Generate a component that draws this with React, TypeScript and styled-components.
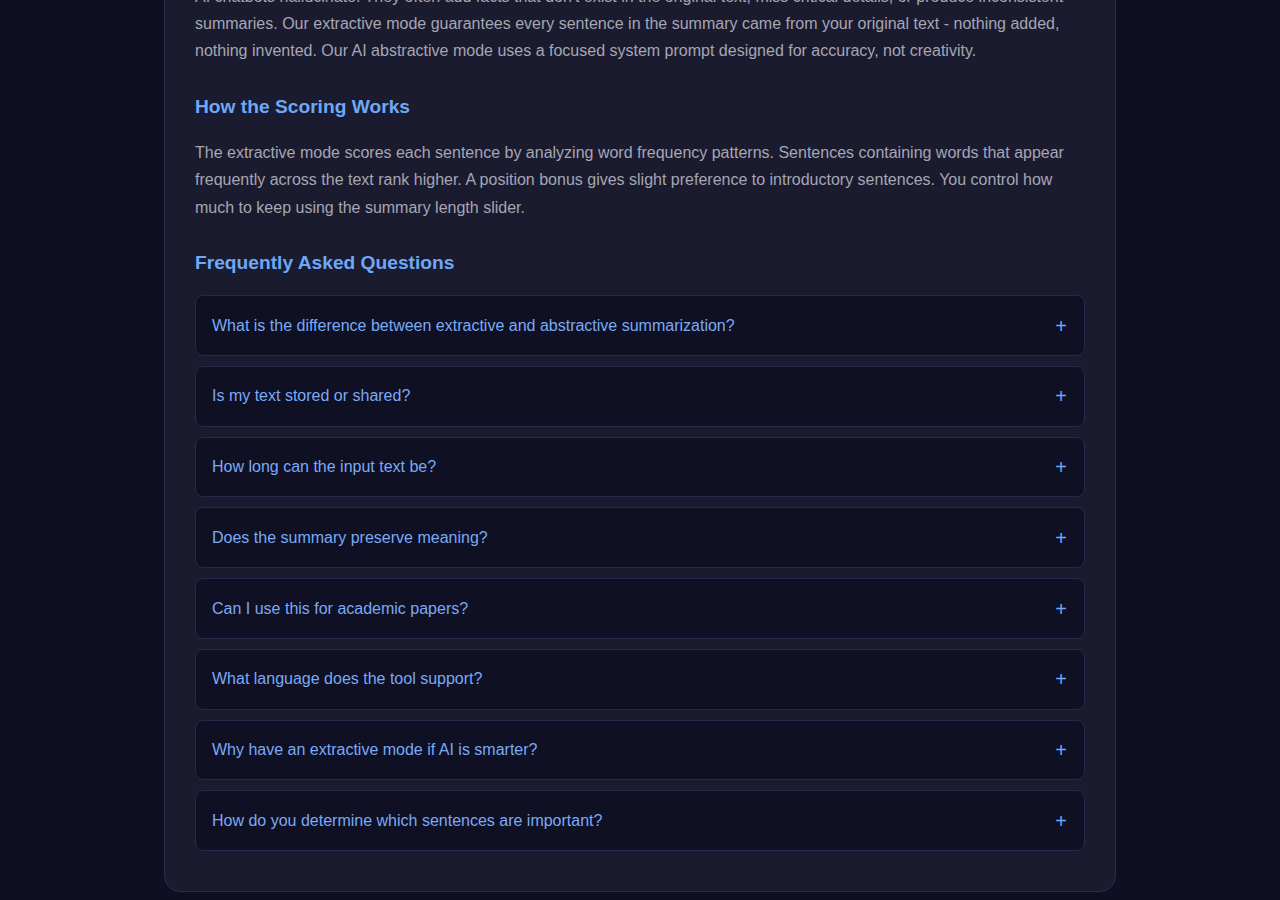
import styled, { createGlobalStyle } from 'styled-components';

const faqs = [
  'What is the difference between extractive and abstractive summarization?',
  'Is my text stored or shared?',
  'How long can the input text be?',
  'Does the summary preserve meaning?',
  'Can I use this for academic papers?',
  'What language does the tool support?',
  'Why have an extractive mode if AI is smarter?',
  'How do you determine which sentences are important?',
];

export default function App() {
  return (
    <>
      <GlobalStyle />
      <Page>
        <InfoCard>
          <Paragraph>
            AI chatbots hallucinate. They often add facts that don't exist in the original text, miss
            critical details, or produce inconsistent summaries. Our extractive mode guarantees every
            sentence in the summary came from your original text - nothing added, nothing invented. Our
            AI abstractive mode uses a focused system prompt designed for accuracy, not creativity.
          </Paragraph>

          <SectionTitle>How the Scoring Works</SectionTitle>
          <Paragraph>
            The extractive mode scores each sentence by analyzing word frequency patterns. Sentences
            containing words that appear frequently across the text rank higher. A position bonus gives
            slight preference to introductory sentences. You control how much to keep using the summary
            length slider.
          </Paragraph>

          <SectionTitle>Frequently Asked Questions</SectionTitle>
          <FaqList>
            {faqs.map((q) => (
              <FaqItem key={q}>
                <FaqQuestion type="button">
                  <span>{q}</span>
                  <PlusSign>+</PlusSign>
                </FaqQuestion>
              </FaqItem>
            ))}
          </FaqList>
        </InfoCard>
      </Page>
    </>
  );
}

const GlobalStyle = createGlobalStyle`
  html, body {
    margin: 0;
    padding: 0;
    background: #0f0f23;
  }
  * { box-sizing: border-box; }
`;

const Page = styled.div`
  min-height: 100vh;
  background: #0f0f23;
  font-family: "Liberation Sans", Arial, sans-serif;
  padding-bottom: 40px;
`;

const InfoCard = styled.section`
  width: 952px;
  margin: -48px auto 0;
  padding: 30px 30px 40px;
  background: #1b1b2f;
  border: 1px solid #2c2b4e;
  border-radius: 16px;
`;

const Paragraph = styled.p`
  margin: 0;
  color: #a6a6b4;
  font-size: 16px;
  line-height: 27.2px;
`;

const SectionTitle = styled.h2`
  margin: 30.6px 0 20px;
  color: #6ea8f8;
  font-size: 19.2px;
  line-height: 24px;
  font-weight: 700;
`;

const FaqList = styled.div`
  display: flex;
  flex-direction: column;
  gap: 10px;
`;

const FaqItem = styled.div`
  background: #0f1024;
  border: 1px solid #28284a;
  border-radius: 8px;
  overflow: hidden;
`;

const FaqQuestion = styled.button`
  width: 100%;
  display: flex;
  align-items: center;
  justify-content: space-between;
  padding: 0 16px;
  height: 58.7px;
  background: transparent;
  border: none;
  color: #7aaaf4;
  font-family: inherit;
  font-size: 16px;
  text-align: left;
  cursor: pointer;
`;

const PlusSign = styled.span`
  color: #6ea8f8;
  font-size: 20px;
  line-height: 1;
  margin-right: 1px;
`;
